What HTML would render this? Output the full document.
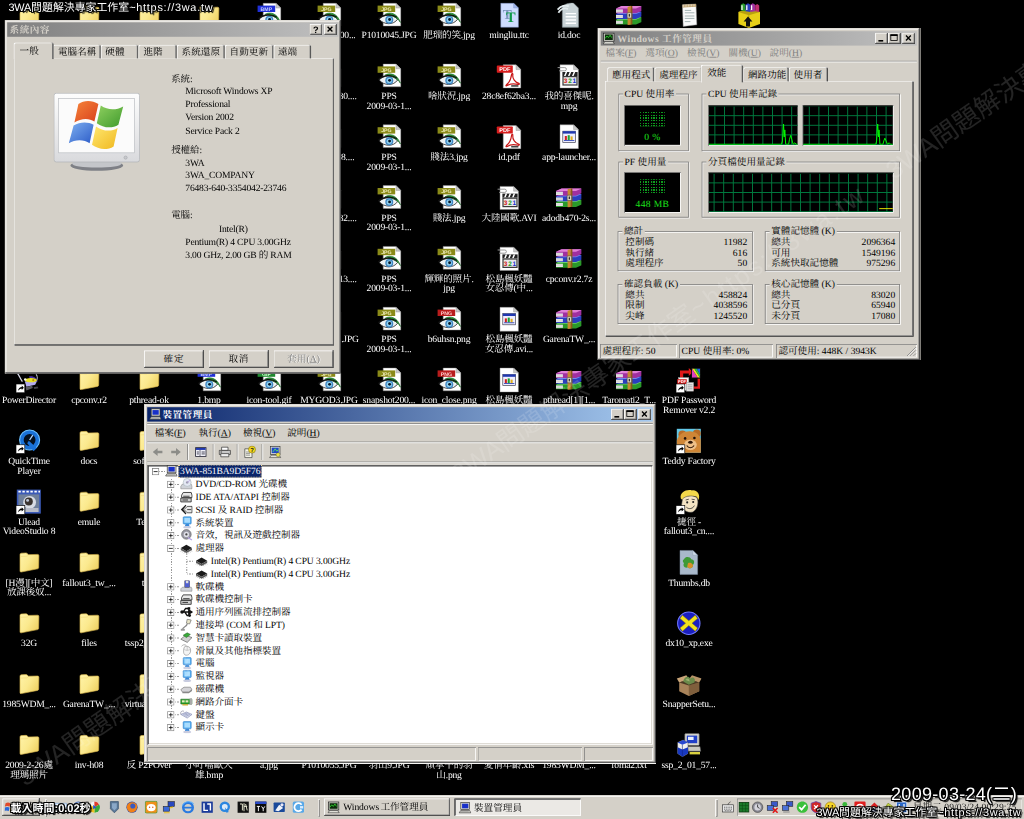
<!DOCTYPE html>
<html><head><meta charset="utf-8"><title>desktop</title>
<style>
html,body{margin:0;padding:0;background:#000}
body{width:1024px;height:819px;overflow:hidden;position:relative;font-family:"Liberation Serif","Noto Serif CJK SC","Noto Sans CJK TC",serif;text-rendering:geometricPrecision}
#d{position:absolute;left:0;top:0;width:1280px;height:1024px;transform:scale(.8);transform-origin:0 0;font-size:12px;line-height:13px;color:#000;overflow:hidden}
#d *{box-sizing:border-box}
.a{position:absolute;white-space:nowrap}
.ic{position:absolute;width:32px;height:32px;overflow:visible}
.lb{position:absolute;width:110px;text-align:center;color:#fff;line-height:12.6px;white-space:nowrap;letter-spacing:-.25px}
.win{position:absolute;background:#d4d0c8;box-shadow:inset -1px -1px #404040,inset 1px 1px #d4d0c8,inset -2px -2px #808080,inset 2px 2px #fff}
.tb{position:absolute;left:4px;right:4px;top:4px;height:18px;background:linear-gradient(90deg,#0a246a,#a6caf0);color:#fff;font-weight:bold;line-height:18px;white-space:nowrap;letter-spacing:.6px}
.tb.in{background:linear-gradient(90deg,#808080,#c0c0c0);color:#d4d0c8}
.cb{position:absolute;top:2px;width:16px;height:14px;background:#d4d0c8;box-shadow:inset -1px -1px #404040,inset 1px 1px #fff,inset -2px -2px #808080}
.cb svg{position:absolute;left:0;top:0}
.btn{position:absolute;background:#d4d0c8;box-shadow:inset -1px -1px #404040,inset 1px 1px #fff,inset -2px -2px #808080;text-align:center;white-space:nowrap}
.sunk{position:absolute;box-shadow:inset 1px 1px #808080,inset -1px -1px #fff}
.sunk2{position:absolute;box-shadow:inset 1px 1px #808080,inset -1px -1px #fff,inset 2px 2px #404040,inset -2px -2px #d4d0c8}
.page{position:absolute;box-shadow:inset 1px 1px #fff,inset -1px -1px #404040,inset -2px -2px #808080}
.tab{position:absolute;background:#d4d0c8;border-radius:2px 2px 0 0;box-shadow:inset 1px 1px #fff,inset -1px 0 #404040,inset -2px 0 #808080;white-space:nowrap;text-align:left;padding-left:6px;line-height:15px}
.grp{position:absolute;border:1px solid #808080;box-shadow:1px 1px #fff,inset 1px 1px #fff}
.gl{position:absolute;background:#d4d0c8;padding:0 2px;white-space:nowrap;line-height:13px}
.blk{position:absolute;background:#000}
.r{text-align:right}
.ov{position:absolute;white-space:nowrap;color:#fff;font-family:"Liberation Sans","Noto Sans CJK TC",sans-serif;text-shadow:-1px -1px 0 #000,1px -1px 0 #000,-1px 1px 0 #000,1px 1px 0 #000,0 -1px 0 #000,0 1px 0 #000,-1px 0 0 #000,1px 0 0 #000,2px 2px 1px #000}
.wm{position:absolute;white-space:nowrap;color:rgba(255,255,255,.14);font-family:"Liberation Sans","Noto Sans CJK TC",sans-serif;font-size:26px;line-height:30px;transform-origin:0 50%}
.tr{position:absolute;left:0;height:16px;line-height:16px;white-space:nowrap;letter-spacing:-.15px}
</style></head>
<body>
<svg width="0" height="0" style="position:absolute"><defs><symbol id="i-jpg" viewBox="0 0 32 32"><path d="M9,1H25L31,7V29.5H9Z" fill="#fff" stroke="#888" stroke-width=".6"/><path d="M25,1V7H31Z" fill="#c8c8c8" stroke="#888" stroke-width=".5"/><rect x="2" y="4" width="22" height="8" fill="#8a8a18"/><text x="13" y="10.5" font-family="Liberation Sans,sans-serif" font-size="6.5" font-weight="bold" text-anchor="middle" fill="#f4f0c0">JPG</text><path d="M4,21C9,15 20,14 27,21C22,28.5 10,28.5 4,21Z" fill="#eef2f4" stroke="#222" stroke-width="1"/><circle cx="16.6" cy="21.6" r="5" fill="#3f86c2"/><circle cx="16.6" cy="21.6" r="3.3" fill="#8fd0f0"/><circle cx="17" cy="21.4" r="1.8" fill="#0a1a2a"/><path d="M11,15C18,11 27,14 30.5,25C27,19 20,15.5 11,15Z" fill="#2e9a3c" stroke="#1c6a28" stroke-width=".8"/><path d="M3,20.5C9,14.5 20,14 26,18.5" fill="none" stroke="#111" stroke-width="1.6"/></symbol><symbol id="i-bmp" viewBox="0 0 32 32"><path d="M9,1H25L31,7V29.5H9Z" fill="#fff" stroke="#888" stroke-width=".6"/><path d="M25,1V7H31Z" fill="#c8c8c8" stroke="#888" stroke-width=".5"/><rect x="2" y="4" width="22" height="8" fill="#2030d8"/><text x="13" y="10.5" font-family="Liberation Sans,sans-serif" font-size="6.5" font-weight="bold" text-anchor="middle" fill="#c8d0ff">BMP</text><path d="M4,21C9,15 20,14 27,21C22,28.5 10,28.5 4,21Z" fill="#eef2f4" stroke="#222" stroke-width="1"/><circle cx="16.6" cy="21.6" r="5" fill="#3f86c2"/><circle cx="16.6" cy="21.6" r="3.3" fill="#8fd0f0"/><circle cx="17" cy="21.4" r="1.8" fill="#0a1a2a"/><path d="M11,15C18,11 27,14 30.5,25C27,19 20,15.5 11,15Z" fill="#2e9a3c" stroke="#1c6a28" stroke-width=".8"/><path d="M3,20.5C9,14.5 20,14 26,18.5" fill="none" stroke="#111" stroke-width="1.6"/></symbol><symbol id="i-png" viewBox="0 0 32 32"><path d="M9,1H25L31,7V29.5H9Z" fill="#fff" stroke="#888" stroke-width=".6"/><path d="M25,1V7H31Z" fill="#c8c8c8" stroke="#888" stroke-width=".5"/><rect x="2" y="4" width="22" height="8" fill="#b81c1c"/><text x="13" y="10.5" font-family="Liberation Sans,sans-serif" font-size="6.5" font-weight="bold" text-anchor="middle" fill="#ffd0d0">PNG</text><path d="M4,21C9,15 20,14 27,21C22,28.5 10,28.5 4,21Z" fill="#eef2f4" stroke="#222" stroke-width="1"/><circle cx="16.6" cy="21.6" r="5" fill="#3f86c2"/><circle cx="16.6" cy="21.6" r="3.3" fill="#8fd0f0"/><circle cx="17" cy="21.4" r="1.8" fill="#0a1a2a"/><path d="M11,15C18,11 27,14 30.5,25C27,19 20,15.5 11,15Z" fill="#2e9a3c" stroke="#1c6a28" stroke-width=".8"/><path d="M3,20.5C9,14.5 20,14 26,18.5" fill="none" stroke="#111" stroke-width="1.6"/></symbol><symbol id="i-gif" viewBox="0 0 32 32"><path d="M9,1H25L31,7V29.5H9Z" fill="#fff" stroke="#888" stroke-width=".6"/><path d="M25,1V7H31Z" fill="#c8c8c8" stroke="#888" stroke-width=".5"/><rect x="2" y="4" width="22" height="8" fill="#208a30"/><text x="13" y="10.5" font-family="Liberation Sans,sans-serif" font-size="6.5" font-weight="bold" text-anchor="middle" fill="#d0ffd0">GIF</text><path d="M4,21C9,15 20,14 27,21C22,28.5 10,28.5 4,21Z" fill="#eef2f4" stroke="#222" stroke-width="1"/><circle cx="16.6" cy="21.6" r="5" fill="#3f86c2"/><circle cx="16.6" cy="21.6" r="3.3" fill="#8fd0f0"/><circle cx="17" cy="21.4" r="1.8" fill="#0a1a2a"/><path d="M11,15C18,11 27,14 30.5,25C27,19 20,15.5 11,15Z" fill="#2e9a3c" stroke="#1c6a28" stroke-width=".8"/><path d="M3,20.5C9,14.5 20,14 26,18.5" fill="none" stroke="#111" stroke-width="1.6"/></symbol><symbol id="i-folder" viewBox="0 0 32 32"><defs><linearGradient id="fg" x1="0" y1="0" x2="1" y2="0.6"><stop offset="0" stop-color="#fff3a8"/><stop offset=".55" stop-color="#fbe98e"/><stop offset="1" stop-color="#f0d468"/></linearGradient></defs><path d="M5,6.2 Q5,4.6 6.6,4.5 L12.4,4.2 Q13.8,4.2 14.5,5.2 L15.2,6.3 L27,6 Q28.6,6 28.6,7.6 L28.3,22.4 Q28.3,23.7 27,24 L6.6,28 Q5,28.3 5,26.8 Z" fill="url(#fg)" stroke="#d6b44c" stroke-width=".8"/><path d="M6,8.6 L13,8.4 Q14.4,8.2 15.2,7.2" stroke="#f0d878" stroke-width=".8" fill="none"/></symbol><symbol id="i-pdf" viewBox="0 0 32 32"><path d="M9,2H25L31,8V31H9Z" fill="#fff" stroke="#888" stroke-width=".6"/><path d="M25,2V8H31Z" fill="#c8c8c8" stroke="#888" stroke-width=".5"/><rect x="1" y="3" width="20" height="9" rx="1" fill="#d81e1e"/><text x="11" y="10.2" font-family="Liberation Sans,sans-serif" font-size="7" font-weight="bold" text-anchor="middle" fill="#fff">PDF</text><path d="M13,27C17,24 19,18 19.5,14C20,12 21.5,12.5 21,15C20.5,19 24,24 28,25C30,25.5 29.5,27 27.5,26.5C23,25.5 17,26 14,28C12.5,29 12,28 13,27Z" fill="none" stroke="#c81818" stroke-width="1.5"/><rect x="19" y="27.4" width="9" height="2" fill="#444"/></symbol><symbol id="i-movie" viewBox="0 0 32 32"><path d="M5,2H22L28,8V31H5Z" fill="#fff" stroke="#888" stroke-width=".6"/><path d="M22,2V8H28Z" fill="#c8c8c8" stroke="#888" stroke-width=".5"/><path d="M2,5.5 h9 a2,2 0 0 1 0,4 h-7" fill="none" stroke="#999" stroke-width="1.2"/><rect x="8" y="11" width="19" height="5" fill="#222"/><path d="M10,16l2,-5h2l-2,5zM15,16l2,-5h2l-2,5zM20,16l2,-5h2l-2,5z" fill="#fff"/><rect x="8" y="16" width="19" height="12" fill="#3a3a3a"/><rect x="9.5" y="17.5" width="16" height="9" fill="#e8e8e8"/><text x="12" y="25.3" font-family="Liberation Sans,sans-serif" font-size="8" font-weight="bold" text-anchor="middle" fill="#d02020">3</text><text x="17.5" y="25.3" font-family="Liberation Sans,sans-serif" font-size="8" font-weight="bold" text-anchor="middle" fill="#20a020">2</text><text x="23" y="25.3" font-family="Liberation Sans,sans-serif" font-size="8" font-weight="bold" text-anchor="middle" fill="#2030d0">1</text></symbol><symbol id="i-rar" viewBox="0 0 32 32"><path d="M0,21.6 L7,18.6 H32 L32,24.6 L25,27.6 H0Z" fill="#2a9a2a"/><path d="M0,21.6 L7,18.6 H32 L25,21.6Z" fill="#6fd06f"/><path d="M0,22.8 H8.6 V26.6 H0Z" fill="#f4f4f4"/><path d="M0,24.0H8.6M0,25.400000000000002H8.6" stroke="#aaa" stroke-width=".5"/><path d="M0,14.6 L7,11.6 H32 L32,17.6 L25,20.6 H0Z" fill="#2a3ec0"/><path d="M0,14.6 L7,11.6 H32 L25,14.6Z" fill="#7088f0"/><path d="M0,15.8 H8.6 V19.6 H0Z" fill="#f4f4f4"/><path d="M0,17.0H8.6M0,18.4H8.6" stroke="#aaa" stroke-width=".5"/><path d="M0,7.6 L7,4.6 H32 L32,10.6 L25,13.6 H0Z" fill="#a030a0"/><path d="M0,7.6 L7,4.6 H32 L25,7.6Z" fill="#e080d8"/><path d="M0,8.8 H8.6 V12.6 H0Z" fill="#f4f4f4"/><path d="M0,10.0H8.6M0,11.399999999999999H8.6" stroke="#aaa" stroke-width=".5"/><path d="M14.5,5.6 L18.5,4.2 V27.8 L14.5,28.2Z" fill="#c88a30"/><path d="M18.5,4.2 L20.5,4.7 V27.3 L18.5,27.8Z" fill="#8a5a18"/><rect x="13.9" y="13" width="5.6" height="6.5" rx="1" fill="#e8e0c8" stroke="#444" stroke-width=".8"/><rect x="15.8" y="14.6" width="1.8" height="3.2" fill="#333"/></symbol><symbol id="i-tt" viewBox="0 0 32 32"><path d="M6,1H22L28,7V31H6Z" fill="#cfdcff" stroke="#7f92c8" stroke-width=".6"/><path d="M22,1V7H28Z" fill="#9fb4e8" stroke="#7f92c8" stroke-width=".5"/><text x="14" y="21" font-family="Liberation Serif,serif" font-size="17" font-weight="bold" text-anchor="middle" fill="#7f98c0">T</text><text x="18.5" y="25" font-family="Liberation Serif,serif" font-size="18" font-weight="bold" text-anchor="middle" fill="#0f9a4a">T</text></symbol><symbol id="i-doc" viewBox="0 0 32 32"><path d="M8,5 C12,1 20,0 22,1 L28,7 V31 H8Z" fill="#c9d3d6" stroke="#8d999c" stroke-width=".6"/><path d="M2,9C6,4 12,3 16,5M3,13C6,8 11,7 15,8" stroke="#e4ecee" stroke-width="2.2" fill="none"/><path d="M12,14H25M12,18H25M12,22H25M12,26H25" stroke="#fff" stroke-width="1.8"/><path d="M8,9V31H28V12" fill="none" stroke="#8d999c" stroke-width=".5"/></symbol><symbol id="i-app" viewBox="0 0 32 32"><path d="M5,1H22L28,7V31H5Z" fill="#fff" stroke="#888" stroke-width=".6"/><path d="M22,1V7H28Z" fill="#c8c8c8" stroke="#888" stroke-width=".5"/><rect x="8.5" y="9" width="16" height="14" fill="#eef" stroke="#334" stroke-width=".8"/><rect x="8.5" y="9" width="16" height="3" fill="#2038b0"/><rect x="11" y="15" width="2.6" height="5" fill="#d02020"/><rect x="14.6" y="14" width="2.6" height="6" fill="#20a030"/><rect x="18.2" y="15.5" width="2.6" height="4.5" fill="#e0b020"/><rect x="10" y="20" width="13" height="1" fill="#2038b0"/></symbol><symbol id="i-txt" viewBox="0 0 32 32"><path d="M8,3 L25,2 L26,28 L9,30Z" fill="#fafafa" stroke="#999" stroke-width=".6"/><path d="M8,3 L25,2 L25.2,5.4 L8.2,6.4Z" fill="#b89860"/><path d="M9.5,3v2.6M11.5,2.9v2.6M13.5,2.8v2.6M15.5,2.7v2.6M17.5,2.6v2.6M19.5,2.5v2.6M21.5,2.4v2.6M23.5,2.3v2.6" stroke="#fff" stroke-width=".7"/><path d="M11,10h8M11,13h12M11,17h12M11,20h12M11,24h7" stroke="#9aa" stroke-width="1.1"/></symbol><symbol id="i-sfx" viewBox="0 0 32 32"><path d="M3,12 L16,8 L30,12 V27 L16,32 L3,27Z" fill="#e8d018"/><path d="M3,12 L16,16 L30,12 L16,8Z" fill="#b8a010"/><path d="M16,16V32" stroke="#a89008" stroke-width=".8"/><path d="M6,10 V3 L9,1 L12,3 V11Z" fill="#2a9a2a"/><path d="M12,11V3 L15,1 L18,3V12Z" fill="#2a3ec0"/><path d="M18,12V3 L21,1 L24,3V11Z" fill="#a030a0"/><path d="M24,11V3.6L26.6,2 L29,4V12Z" fill="#c03070"/><path d="M7.5,3.5v6M13.5,3.5v6M19.5,3.5v6" stroke="#fff" stroke-width="1.6"/><path d="M12.5,30 V24 H9.5 L15,17.5 L20.5,24 H17.5 V30Z" fill="#111"/></symbol><symbol id="i-pdir" viewBox="0 0 32 32"><path d="M2,8 C4,10 5,14 8,18" stroke="#d8d8e8" stroke-width="1.6" fill="none"/><path d="M25,9 C27,11 27,15 25,18" stroke="#c8c8d8" stroke-width="1.4" fill="none"/><path d="M16,12 C20,10 26,13 27,18 L22,19 Z" fill="#4a30a8"/><path d="M11,17.5 L26,18 L24,22 L13,24.5Z" fill="#b4acf0"/><ellipse cx="18.6" cy="16.2" rx="7.6" ry="2.7" fill="#e8e224"/><circle cx="21.6" cy="16.2" r="1.3" fill="#b88a10"/><circle cx="11.6" cy="15.4" r="1.6" fill="#f4f4e0"/><path d="M12,25 L20,23 L21,26 L13,29Z" fill="#5a5a60"/><path d="M22,25l5,-1l1,2.4l-5,1z" fill="#44444a"/><rect x="0" y="21" width="11" height="11" fill="#fff" stroke="#000" stroke-width=".8"/><path d="M2.5,29.5 C3,26 5,24.6 7.2,24.6 V23 L9.8,25.8 L7.2,28.5 V26.8 C5.4,26.8 4,27.6 2.5,29.5Z" fill="#000"/></symbol><symbol id="i-qt" viewBox="0 0 32 32"><circle cx="17" cy="15" r="12.5" fill="#1a72d8"/><circle cx="17" cy="15" r="12.5" fill="none" stroke="#6cc0ff" stroke-width="1.4"/><circle cx="17" cy="15" r="7.4" fill="#04101e"/><path d="M16,16 L26,25 L22,29 L14,19Z" fill="#1a72d8"/><path d="M17,15 L21,9" stroke="#b8dcff" stroke-width="1.6"/><rect x="0" y="21" width="11" height="11" fill="#fff" stroke="#000" stroke-width=".8"/><path d="M2.5,29.5 C3,26 5,24.6 7.2,24.6 V23 L9.8,25.8 L7.2,28.5 V26.8 C5.4,26.8 4,27.6 2.5,29.5Z" fill="#000"/></symbol><symbol id="i-ulead" viewBox="0 0 32 32"><rect x="1" y="1" width="30" height="30" fill="#3b5ab8"/><path d="M3,3.5h3M8,3.5h3M13,3.5h3M18,3.5h3M23,3.5h3M28,3.5h2" stroke="#fff" stroke-width="2.2"/><rect x="3" y="7" width="26" height="22" fill="#70809a"/><circle cx="17" cy="17" r="8" fill="#d8dce4"/><circle cx="16" cy="16" r="5" fill="#3a3430"/><circle cx="14.5" cy="14.5" r="1.8" fill="#c0c8d8"/><rect x="12" y="24" width="16" height="5" fill="#b8bcc8"/><rect x="0" y="21" width="11" height="11" fill="#fff" stroke="#000" stroke-width=".8"/><path d="M2.5,29.5 C3,26 5,24.6 7.2,24.6 V23 L9.8,25.8 L7.2,28.5 V26.8 C5.4,26.8 4,27.6 2.5,29.5Z" fill="#000"/></symbol><symbol id="i-pdfpr" viewBox="0 0 32 32"><path d="M5,4 H16 V1 L21,6 L16,11 V8 H9 V14 H5Z" fill="#e01818"/><path d="M30,14 V27 H22 V30 L17,25.5 L22,21 V24 H27 V14Z" fill="#e01818"/><rect x="19" y="1" width="12" height="13" fill="#111"/><path d="M20,2 l3,0 l7,11 l-3,0z" fill="#f0e020"/><path d="M23,2 l3,0 l4,7 l0,4z" fill="#30c040"/><path d="M26,2 l4,0 l0,7z" fill="#2060e0"/><path d="M20,2 l7,11 l-7,0z" fill="#e040c0"/><rect x="3" y="13" width="13" height="16" fill="#f4f4f4" stroke="#999" stroke-width=".6"/><rect x="1.5" y="15" width="12" height="6" fill="#d81e1e"/><text x="7.5" y="20" font-family="Liberation Sans,sans-serif" font-size="5" font-weight="bold" text-anchor="middle" fill="#fff">PDF</text><rect x="13" y="19" width="9" height="11" fill="#e4e4e4" stroke="#888" stroke-width=".6"/><path d="M14.5,22h6M14.5,24.5h6M14.5,27h6" stroke="#888" stroke-width=".8"/><rect x="0" y="21" width="11" height="11" fill="#fff" stroke="#000" stroke-width=".8"/><path d="M2.5,29.5 C3,26 5,24.6 7.2,24.6 V23 L9.8,25.8 L7.2,28.5 V26.8 C5.4,26.8 4,27.6 2.5,29.5Z" fill="#000"/></symbol><symbol id="i-teddy" viewBox="0 0 32 32"><rect x="1" y="1" width="30" height="30" fill="#62c8e8"/><circle cx="8" cy="8" r="5" fill="#b86c26"/><circle cx="26" cy="7" r="5" fill="#b86c26"/><path d="M1,31 V16 C3,8 9,4 17,4 C25,4 30,9 31,15 V31Z" fill="#cf8636"/><ellipse cx="18" cy="21" rx="8" ry="6.4" fill="#eec088"/><ellipse cx="18" cy="17.8" rx="2.8" ry="2" fill="#301808"/><circle cx="11.4" cy="13" r="1.6" fill="#201008"/><circle cx="23" cy="12.4" r="1.6" fill="#201008"/><path d="M13.4,22C15.6,25.6 20.4,25.6 22.6,22" fill="none" stroke="#301808" stroke-width="1.3"/><rect x="0" y="21" width="11" height="11" fill="#fff" stroke="#000" stroke-width=".8"/><path d="M2.5,29.5 C3,26 5,24.6 7.2,24.6 V23 L9.8,25.8 L7.2,28.5 V26.8 C5.4,26.8 4,27.6 2.5,29.5Z" fill="#000"/></symbol><symbol id="i-vault" viewBox="0 0 32 32"><path d="M6,12 C4,4 14,0 20,2 C27,1 31,8 28,14 L26,10 C20,8 12,9 8,14Z" fill="#f2d84a"/><path d="M8,13 C12,8 22,8 26,11 C29,16 27,26 21,29 C14,31 8,26 7,20Z" fill="#f4e4c4" stroke="#444" stroke-width=".7"/><circle cx="14" cy="17" r="1.3" fill="#222"/><circle cx="21.5" cy="16.5" r="1.3" fill="#222"/><path d="M13,23C16,26 21,25 23,21" fill="none" stroke="#333" stroke-width="1.1"/><path d="M12,14l4,-1M19.5,13l4,.6" stroke="#333" stroke-width="1"/><rect x="0" y="21" width="11" height="11" fill="#fff" stroke="#000" stroke-width=".8"/><path d="M2.5,29.5 C3,26 5,24.6 7.2,24.6 V23 L9.8,25.8 L7.2,28.5 V26.8 C5.4,26.8 4,27.6 2.5,29.5Z" fill="#000"/></symbol><symbol id="i-thumbs" viewBox="0 0 32 32"><path d="M5,1H21L27,7V31H5Z" fill="#a9b9cb" stroke="#7f8fa4" stroke-width=".6"/><path d="M21,1V7H27Z" fill="#d0dcea" stroke="#7f8fa4" stroke-width=".5"/><path d="M10,12 C12,8 18,9 19,12 C23,12 24,17 21,19 C22,23 17,25 15,22 C11,24 8,20 10,17 C8,15 8,13 10,12Z" fill="#3f9a36"/><path d="M15,17 C18,15 22,18 21,21 C20,24 15,24 14,21Z" fill="#d8902a"/></symbol><symbol id="i-dx" viewBox="0 0 32 32"><circle cx="16" cy="16" r="14" fill="#1a1ec0"/><circle cx="16" cy="16" r="14" fill="none" stroke="#6f78ff" stroke-width="1.3"/><path d="M8,6 L16,13 L24,6 L27,10 L20,16 L27,22 L24,26 L16,19 L8,26 L5,22 L12,16 L5,10Z" fill="#f2e21c" stroke="#8a7a00" stroke-width=".6"/></symbol><symbol id="i-snap" viewBox="0 0 32 32"><path d="M4,14 L16,10 L29,14 V25 L16,31 L4,25Z" fill="#a8835a"/><path d="M16,18V31L29,25V14Z" fill="#7f5f3c"/><path d="M4,14 L1,9 L13,5 L16,10Z" fill="#c8a478"/><path d="M29,14 L32,9 L20,5 L16,10Z" fill="#b89468"/><path d="M4,14 L16,18 L29,14 L16,10Z" fill="#4c3a24"/><path d="M9,13 C10,7 15,5 18,9 C22,6 25,10 23,14 L16,17Z" fill="#6a8a4a"/><path d="M12,11 C14,8 17,9 17,13Z" fill="#9ab070"/></symbol><symbol id="i-ssp" viewBox="0 0 32 32"><rect x="11" y="2" width="18" height="15" rx="1" fill="#d8d8d0" stroke="#555" stroke-width=".8"/><rect x="13.5" y="4.5" width="13" height="9.5" fill="#2040c8"/><rect x="15" y="6" width="7" height="4" fill="#e8f0ff"/><path d="M14,18 H30 L31,24 H15Z" fill="#c8c8c0" stroke="#555" stroke-width=".7"/><rect x="17" y="25" width="13" height="3" fill="#d8d040"/><path d="M2,13 L9,10 L15,13 V27 L8,31 L2,27Z" fill="#f0f0f0" stroke="#444" stroke-width=".6"/><path d="M2,19 L8,22 L15,19 V27 L8,31 L2,27Z" fill="#1838c0"/><path d="M2,13 L8,16 L15,13 L9,10Z" fill="#2848d0"/><path d="M8,16V31" stroke="#0c2080" stroke-width=".7"/></symbol><symbol id="s-pc" viewBox="0 0 16 16"><rect x="3" y="1" width="11" height="9" fill="#d8d8d0" stroke="#333" stroke-width=".8"/><rect x="4.6" y="2.6" width="7.8" height="5.8" fill="#1830c8"/><path d="M1,14 L3,11 H14 L15.5,14Z" fill="#e0e0d8" stroke="#333" stroke-width=".8"/><path d="M3,12.6h10" stroke="#777" stroke-width=".7"/></symbol><symbol id="s-dvd" viewBox="0 0 16 16"><path d="M1,11 L3,8 H14 L15,11 V14 H1Z" fill="#cfd2d8" stroke="#777" stroke-width=".6"/><circle cx="9" cy="6" r="5" fill="#e4e8f4" stroke="#9aa" stroke-width=".6"/><circle cx="9" cy="6" r="1.5" fill="#99a"/><path d="M9,6L13,3" stroke="#b8a0e0" stroke-width="1"/></symbol><symbol id="s-ide" viewBox="0 0 16 16"><path d="M2,6 L4,2.6 H14 L15,6 V9 H2Z" fill="#e8e8e8" stroke="#333" stroke-width="1.1"/><path d="M1,9.6 H14 V14.4 H1Z" fill="#d0d0d0" stroke="#333" stroke-width="1.1"/><path d="M3,12h7" stroke="#333" stroke-width="1.2"/><path d="M4,7.3h8" stroke="#333" stroke-width="1.1"/></symbol><symbol id="s-scsi" viewBox="0 0 16 16"><path d="M1,8 L7,2 L8,3 L4,8 L8,13 L7,14Z" fill="#222"/><path d="M5,8 L9,4 H15 V12 H9Z" fill="#e8e8e8" stroke="#222" stroke-width=".9"/><path d="M9,8h5" stroke="#222" stroke-width="1"/></symbol><symbol id="s-sys" viewBox="0 0 16 16"><rect x="4" y="1" width="10" height="9" rx="1" fill="#58b0f0" stroke="#2a78c8" stroke-width=".7"/><rect x="5.5" y="2.4" width="7" height="6" fill="#a8dcff"/><path d="M7,10h4l1,3H6Z" fill="#3a88d8"/><ellipse cx="9" cy="14" rx="5" ry="1.5" fill="#c8cce0"/></symbol><symbol id="s-snd" viewBox="0 0 16 16"><circle cx="8" cy="7" r="6" fill="#9a9aa4" stroke="#555" stroke-width=".7"/><circle cx="8" cy="7" r="3.3" fill="#e0e0e8"/><circle cx="8" cy="7" r="1.4" fill="#444"/><path d="M10,11l5,3" stroke="#b8a8e8" stroke-width="1.6"/></symbol><symbol id="s-cpu" viewBox="0 0 16 16"><path d="M1,8 L8,4 L15,8 L8,12Z" fill="#1a1a1a"/><path d="M1,8V10.4L8,14.4L15,10.4V8L8,12Z" fill="#555"/><path d="M2,11l-1,1.5M4,12l-1,1.5M6,13.2l-1,1.5M14,11l1,1.5M12,12l1,1.5M10,13.2l1,1.5" stroke="#888" stroke-width=".7"/></symbol><symbol id="s-fdd" viewBox="0 0 16 16"><path d="M1,11 L3,9 H14 L15,11 V14 H1Z" fill="#cfd2d8" stroke="#777" stroke-width=".6"/><rect x="6" y="1" width="6" height="8" fill="#5060d0" stroke="#223" stroke-width=".5"/><rect x="7.4" y="1" width="3" height="3" fill="#ddd"/></symbol><symbol id="s-usb" viewBox="0 0 16 16"><path d="M1,8h13M15,8l-4,-2.6v5.2zM4,8l3,-4.4h3M6,8l3,4.4h2" stroke="#111" stroke-width="1.7" fill="none"/><circle cx="2.6" cy="8" r="2.2" fill="#111"/><rect x="9.6" y="2" width="3.2" height="3.2" fill="#111"/><circle cx="12" cy="12.4" r="1.8" fill="#111"/></symbol><symbol id="s-port" viewBox="0 0 16 16"><path d="M9,1 L14,2 L12,7 L8,6Z" fill="#e8e4c8" stroke="#555" stroke-width=".7"/><path d="M9,7 C8,11 4,10 3,14" stroke="#8a8a8a" stroke-width="1.6" fill="none"/><rect x="1" y="13" width="5" height="2.4" fill="#999"/></symbol><symbol id="s-card" viewBox="0 0 16 16"><path d="M1,10 L7,5 L15,8 L9,14Z" fill="#d0d0d0" stroke="#444" stroke-width=".7"/><path d="M4,5 L9,2 L13,4 L8,8Z" fill="#38a838" stroke="#1a5a1a" stroke-width=".6"/></symbol><symbol id="s-mouse" viewBox="0 0 16 16"><path d="M5,5 C5,2 12,2 13,6 C14,10 12,14 8,14 C4,14 4,9 5,5Z" fill="#f4f4f4" stroke="#888" stroke-width=".8"/><path d="M5.4,7 C8,8.5 11,8 13.2,6.6M9,3.4V8" stroke="#aaa" stroke-width=".7" fill="none"/><path d="M8,2C6,0 3,1 2,3" stroke="#888" stroke-width=".8" fill="none"/></symbol><symbol id="s-disk" viewBox="0 0 16 16"><path d="M1,9 L5,6 H13 L15,9 L11,12 H3Z" fill="#d4d4d8" stroke="#666" stroke-width=".7"/><path d="M3,12 H11 L15,9 V10.6 L11,13.6 H3Z" fill="#888"/></symbol><symbol id="s-nic" viewBox="0 0 16 16"><path d="M1,5 H15 V11 H1Z" fill="#2fa52f" stroke="#145a14" stroke-width=".7"/><rect x="2.4" y="6.4" width="3.4" height="2.6" fill="#e8e8c0"/><rect x="7" y="6.4" width="3.4" height="2.6" fill="#e8e8c0"/><path d="M3,11v2h7v-2" fill="#c8b040"/><rect x="12" y="4" width="3" height="8" fill="#aaa"/></symbol><symbol id="s-kbd" viewBox="0 0 16 16"><path d="M1,8 L8,5 L15,8 L9,12.6Z" fill="#d4d8ec" stroke="#7880a8" stroke-width=".7"/><path d="M4,8l5,-1.6M5.6,9.2l5,-2M7.4,10.4l5,-2.4" stroke="#8088b0" stroke-width=".7"/><path d="M1,8C0,5 2,3 5,4" stroke="#889" stroke-width=".8" fill="none"/></symbol><symbol id="s-help" viewBox="0 0 16 16"><path d="M2,4 H9 L11,6 V15 H2Z" fill="#f4f4e8" stroke="#333" stroke-width=".8"/><path d="M3.5,8h5M3.5,10h5M3.5,12h5" stroke="#555" stroke-width=".7"/><circle cx="11" cy="5" r="4.4" fill="#f4d820" stroke="#6a5a00" stroke-width=".6"/><text x="11" y="7.8" font-family="Liberation Sans,sans-serif" font-size="7.5" font-weight="bold" text-anchor="middle" fill="#111">?</text></symbol><symbol id="s-prn" viewBox="0 0 16 16"><path d="M4,2 H12 V6 H4Z" fill="#fff" stroke="#222" stroke-width=".8"/><path d="M1,6 H15 V11 H1Z" fill="#c8c8c8" stroke="#222" stroke-width=".8"/><path d="M3,10 H13 V14 H3Z" fill="#eee" stroke="#222" stroke-width=".8"/><path d="M2.6,8h2" stroke="#222" stroke-width="1"/></symbol><symbol id="s-prop" viewBox="0 0 16 16"><rect x="1.5" y="2.5" width="13" height="11" fill="#f0f0f8" stroke="#223" stroke-width="1"/><rect x="2" y="3" width="12" height="2.4" fill="#2038b0"/><path d="M7,5.4V13" stroke="#223" stroke-width=".8"/><path d="M3,8h2.6M3,10.4h2.6M9,8h4M9,10.4h4" stroke="#223" stroke-width="1"/></symbol><symbol id="s-scan" viewBox="0 0 16 16"><rect x="2" y="1" width="12" height="10" fill="#d8d8d0" stroke="#333" stroke-width=".8"/><rect x="3.6" y="2.6" width="8.8" height="6.8" fill="#1f48c8"/><path d="M5,8l3,-4l2,3l2,-2" stroke="#58e858" stroke-width="1.1" fill="none"/><path d="M1,15 L3,12 H13 L15,15Z" fill="#e0e0d8" stroke="#333" stroke-width=".7"/><circle cx="11.6" cy="11.4" r="2.6" fill="#e8e040" stroke="#444" stroke-width=".5"/></symbol><symbol id="s-tm" viewBox="0 0 16 16"><rect x="1.5" y="1.5" width="13" height="10" fill="#d8d8d0" stroke="#222" stroke-width=".9"/><rect x="3" y="3" width="10" height="7" fill="#0a2a0a"/><path d="M3.6,8l2,-3l2,2l2,-3l2,3" stroke="#30e030" stroke-width="1" fill="none"/><path d="M1,15L3,12H13L15,15Z" fill="#e0e0d8" stroke="#222" stroke-width=".7"/></symbol></defs></svg>
<div id="d">
<div class="a" id="desk" style="left:0;top:0;width:1280px;height:994px">
<svg class="ic" style="left:20.25px;top:2.5px"><use href="#i-folder"/></svg>
<svg class="ic" style="left:95.25px;top:2.5px"><use href="#i-folder"/></svg>
<svg class="ic" style="left:170.25px;top:2.5px"><use href="#i-folder"/></svg>
<svg class="ic" style="left:245.25px;top:2.5px"><use href="#i-folder"/></svg>
<svg class="ic" style="left:320.25px;top:2.5px"><use href="#i-bmp"/></svg>
<svg class="ic" style="left:395.25px;top:2.5px"><use href="#i-jpg"/></svg><div class="lb" style="left:356.25px;top:37.5px">P101000100...</div>
<svg class="ic" style="left:470.25px;top:2.5px"><use href="#i-jpg"/></svg><div class="lb" style="left:431.25px;top:37.5px">P1010045.JPG</div>
<svg class="ic" style="left:545.25px;top:2.5px"><use href="#i-jpg"/></svg><div class="lb" style="left:506.25px;top:37.5px">肥瑞的笑.jpg</div>
<svg class="ic" style="left:620.25px;top:2.5px"><use href="#i-tt"/></svg><div class="lb" style="left:581.25px;top:37.5px">mingliu.ttc</div>
<svg class="ic" style="left:695.25px;top:2.5px"><use href="#i-doc"/></svg><div class="lb" style="left:656.25px;top:37.5px">id.doc</div>
<svg class="ic" style="left:770.25px;top:2.5px"><use href="#i-rar"/></svg>
<svg class="ic" style="left:845.25px;top:2.5px"><use href="#i-txt"/></svg>
<svg class="ic" style="left:920.25px;top:2.5px"><use href="#i-sfx"/></svg>
<svg class="ic" style="left:395.25px;top:78.5px"><use href="#i-jpg"/></svg><div class="lb" style="left:356.25px;top:113.5px">P101001030....</div>
<svg class="ic" style="left:470.25px;top:78.5px"><use href="#i-jpg"/></svg><div class="lb" style="left:431.25px;top:113.5px">PPS<br>2009-03-1...</div>
<svg class="ic" style="left:545.25px;top:78.5px"><use href="#i-jpg"/></svg><div class="lb" style="left:506.25px;top:113.5px">啥狀況.jpg</div>
<svg class="ic" style="left:620.25px;top:78.5px"><use href="#i-pdf"/></svg><div class="lb" style="left:581.25px;top:113.5px">28c8ef62ba3...</div>
<svg class="ic" style="left:695.25px;top:78.5px"><use href="#i-movie"/></svg><div class="lb" style="left:656.25px;top:113.5px">我的喜傑呢.<br>mpg</div>
<svg class="ic" style="left:395.25px;top:154.5px"><use href="#i-jpg"/></svg><div class="lb" style="left:356.25px;top:189.5px">P10100128....</div>
<svg class="ic" style="left:470.25px;top:154.5px"><use href="#i-jpg"/></svg><div class="lb" style="left:431.25px;top:189.5px">PPS<br>2009-03-1...</div>
<svg class="ic" style="left:545.25px;top:154.5px"><use href="#i-jpg"/></svg><div class="lb" style="left:506.25px;top:189.5px">賤法3.jpg</div>
<svg class="ic" style="left:620.25px;top:154.5px"><use href="#i-pdf"/></svg><div class="lb" style="left:581.25px;top:189.5px">id.pdf</div>
<svg class="ic" style="left:695.25px;top:154.5px"><use href="#i-app"/></svg><div class="lb" style="left:656.25px;top:189.5px">app-launcher...</div>
<svg class="ic" style="left:395.25px;top:230.5px"><use href="#i-jpg"/></svg><div class="lb" style="left:356.25px;top:265.5px">P101001032....</div>
<svg class="ic" style="left:470.25px;top:230.5px"><use href="#i-jpg"/></svg><div class="lb" style="left:431.25px;top:265.5px">PPS<br>2009-03-1...</div>
<svg class="ic" style="left:545.25px;top:230.5px"><use href="#i-jpg"/></svg><div class="lb" style="left:506.25px;top:265.5px">賤法.jpg</div>
<svg class="ic" style="left:620.25px;top:230.5px"><use href="#i-movie"/></svg><div class="lb" style="left:581.25px;top:265.5px">大陸國歌.AVI</div>
<svg class="ic" style="left:695.25px;top:230.5px"><use href="#i-rar"/></svg><div class="lb" style="left:656.25px;top:265.5px">adodb470-2s...</div>
<svg class="ic" style="left:395.25px;top:306.5px"><use href="#i-jpg"/></svg><div class="lb" style="left:356.25px;top:341.5px">P101001013....</div>
<svg class="ic" style="left:470.25px;top:306.5px"><use href="#i-jpg"/></svg><div class="lb" style="left:431.25px;top:341.5px">PPS<br>2009-03-1...</div>
<svg class="ic" style="left:545.25px;top:306.5px"><use href="#i-jpg"/></svg><div class="lb" style="left:506.25px;top:341.5px">輝輝的照片.<br>jpg</div>
<svg class="ic" style="left:620.25px;top:306.5px"><use href="#i-movie"/></svg><div class="lb" style="left:581.25px;top:341.5px">松島楓妖豔<br>女忍傳(中...</div>
<svg class="ic" style="left:695.25px;top:306.5px"><use href="#i-rar"/></svg><div class="lb" style="left:656.25px;top:341.5px">cpconv.r2.7z</div>
<svg class="ic" style="left:395.25px;top:382.5px"><use href="#i-jpg"/></svg><div class="lb" style="left:356.25px;top:417.5px">P10100105.JPG</div>
<svg class="ic" style="left:470.25px;top:382.5px"><use href="#i-jpg"/></svg><div class="lb" style="left:431.25px;top:417.5px">PPS<br>2009-03-1...</div>
<svg class="ic" style="left:545.25px;top:382.5px"><use href="#i-png"/></svg><div class="lb" style="left:506.25px;top:417.5px">b6uhsn.png</div>
<svg class="ic" style="left:620.25px;top:382.5px"><use href="#i-app"/></svg><div class="lb" style="left:581.25px;top:417.5px">松島楓妖豔<br>女忍傳.avi...</div>
<svg class="ic" style="left:695.25px;top:382.5px"><use href="#i-rar"/></svg><div class="lb" style="left:656.25px;top:417.5px">GarenaTW_...</div>
<svg class="ic" style="left:20.25px;top:458.5px"><use href="#i-pdir"/></svg><div class="lb" style="left:-18.75px;top:493.5px">PowerDirector</div>
<svg class="ic" style="left:95.25px;top:458.5px"><use href="#i-folder"/></svg><div class="lb" style="left:56.25px;top:493.5px">cpconv.r2</div>
<svg class="ic" style="left:170.25px;top:458.5px"><use href="#i-folder"/></svg><div class="lb" style="left:131.25px;top:493.5px">pthread-ok</div>
<svg class="ic" style="left:245.25px;top:458.5px"><use href="#i-bmp"/></svg><div class="lb" style="left:206.25px;top:493.5px">1.bmp</div>
<svg class="ic" style="left:320.25px;top:458.5px"><use href="#i-gif"/></svg><div class="lb" style="left:281.25px;top:493.5px">icon-tool.gif</div>
<svg class="ic" style="left:395.25px;top:458.5px"><use href="#i-jpg"/></svg><div class="lb" style="left:356.25px;top:493.5px">MYGOD3.JPG</div>
<svg class="ic" style="left:470.25px;top:458.5px"><use href="#i-jpg"/></svg><div class="lb" style="left:431.25px;top:493.5px">snapshot200...</div>
<svg class="ic" style="left:545.25px;top:458.5px"><use href="#i-png"/></svg><div class="lb" style="left:506.25px;top:493.5px">icon_close.png</div>
<svg class="ic" style="left:620.25px;top:458.5px"><use href="#i-app"/></svg><div class="lb" style="left:581.25px;top:493.5px">松島楓妖豔</div>
<svg class="ic" style="left:695.25px;top:458.5px"><use href="#i-rar"/></svg><div class="lb" style="left:656.25px;top:493.5px">pthread[1][1...</div>
<svg class="ic" style="left:770.25px;top:458.5px"><use href="#i-rar"/></svg><div class="lb" style="left:731.25px;top:493.5px">Taromati2_T...</div>
<svg class="ic" style="left:845.25px;top:458.5px"><use href="#i-pdfpr"/></svg><div class="lb" style="left:806.25px;top:493.5px">PDF Password<br>Remover v2.2</div>
<svg class="ic" style="left:20.25px;top:534.5px"><use href="#i-qt"/></svg><div class="lb" style="left:-18.75px;top:569.5px">QuickTime<br>Player</div>
<svg class="ic" style="left:95.25px;top:534.5px"><use href="#i-folder"/></svg><div class="lb" style="left:56.25px;top:569.5px">docs</div>
<svg class="ic" style="left:170.25px;top:534.5px"><use href="#i-folder"/></svg><div class="lb" style="left:131.25px;top:569.5px">software</div>
<svg class="ic" style="left:845.25px;top:534.5px"><use href="#i-teddy"/></svg><div class="lb" style="left:806.25px;top:569.5px">Teddy Factory</div>
<svg class="ic" style="left:20.25px;top:610.5px"><use href="#i-ulead"/></svg><div class="lb" style="left:-18.75px;top:645.5px">Ulead<br>VideoStudio 8</div>
<svg class="ic" style="left:95.25px;top:610.5px"><use href="#i-folder"/></svg><div class="lb" style="left:56.25px;top:645.5px">emule</div>
<svg class="ic" style="left:170.25px;top:610.5px"><use href="#i-folder"/></svg><div class="lb" style="left:131.25px;top:645.5px">Tempo</div>
<svg class="ic" style="left:845.25px;top:610.5px"><use href="#i-vault"/></svg><div class="lb" style="left:806.25px;top:645.5px">捷徑 -<br>fallout3_cn....</div>
<svg class="ic" style="left:20.25px;top:686.5px"><use href="#i-folder"/></svg><div class="lb" style="left:-18.75px;top:721.5px">[H漫][中文]<br>放課後奴...</div>
<svg class="ic" style="left:95.25px;top:686.5px"><use href="#i-folder"/></svg><div class="lb" style="left:56.25px;top:721.5px">fallout3_tw_...</div>
<svg class="ic" style="left:170.25px;top:686.5px"><use href="#i-folder"/></svg><div class="lb" style="left:131.25px;top:721.5px">tmp</div>
<svg class="ic" style="left:845.25px;top:686.5px"><use href="#i-thumbs"/></svg><div class="lb" style="left:806.25px;top:721.5px">Thumbs.db</div>
<svg class="ic" style="left:20.25px;top:762.5px"><use href="#i-folder"/></svg><div class="lb" style="left:-18.75px;top:797.5px">32G</div>
<svg class="ic" style="left:95.25px;top:762.5px"><use href="#i-folder"/></svg><div class="lb" style="left:56.25px;top:797.5px">files</div>
<svg class="ic" style="left:170.25px;top:762.5px"><use href="#i-folder"/></svg><div class="lb" style="left:131.25px;top:797.5px">tssp2_01_5...</div>
<svg class="ic" style="left:845.25px;top:762.5px"><use href="#i-dx"/></svg><div class="lb" style="left:806.25px;top:797.5px">dx10_xp.exe</div>
<svg class="ic" style="left:20.25px;top:838.5px"><use href="#i-folder"/></svg><div class="lb" style="left:-18.75px;top:873.5px">1985WDM_...</div>
<svg class="ic" style="left:95.25px;top:838.5px"><use href="#i-folder"/></svg><div class="lb" style="left:56.25px;top:873.5px">GarenaTW_...</div>
<svg class="ic" style="left:170.25px;top:838.5px"><use href="#i-folder"/></svg><div class="lb" style="left:131.25px;top:873.5px">virtualbox_...</div>
<svg class="ic" style="left:845.25px;top:838.5px"><use href="#i-snap"/></svg><div class="lb" style="left:806.25px;top:873.5px">SnapperSetu...</div>
<svg class="ic" style="left:20.25px;top:914.5px"><use href="#i-folder"/></svg><div class="lb" style="left:-18.75px;top:949.5px">2009-2-26處<br>理瑪照片</div>
<svg class="ic" style="left:95.25px;top:914.5px"><use href="#i-folder"/></svg><div class="lb" style="left:56.25px;top:949.5px">inv-h08</div>
<svg class="ic" style="left:170.25px;top:914.5px"><use href="#i-folder"/></svg><div class="lb" style="left:131.25px;top:949.5px">反 P2POver</div>
<svg class="ic" style="left:245.25px;top:914.5px"><use href="#i-bmp"/></svg><div class="lb" style="left:206.25px;top:949.5px">小叮噹歐大<br>雄.bmp</div>
<svg class="ic" style="left:320.25px;top:914.5px"><use href="#i-jpg"/></svg><div class="lb" style="left:281.25px;top:949.5px">a.jpg</div>
<svg class="ic" style="left:395.25px;top:914.5px"><use href="#i-jpg"/></svg><div class="lb" style="left:356.25px;top:949.5px">P1010055.JPG</div>
<svg class="ic" style="left:470.25px;top:914.5px"><use href="#i-jpg"/></svg><div class="lb" style="left:431.25px;top:949.5px">羽山9.JPG</div>
<svg class="ic" style="left:545.25px;top:914.5px"><use href="#i-png"/></svg><div class="lb" style="left:506.25px;top:949.5px">頑掌牛的羽<br>山.png</div>
<svg class="ic" style="left:620.25px;top:914.5px"><use href="#i-app"/></svg><div class="lb" style="left:581.25px;top:949.5px">愛情年齡.xls</div>
<svg class="ic" style="left:695.25px;top:914.5px"><use href="#i-folder"/></svg><div class="lb" style="left:656.25px;top:949.5px">1985WDM_...</div>
<svg class="ic" style="left:770.25px;top:914.5px"><use href="#i-txt"/></svg><div class="lb" style="left:731.25px;top:949.5px">foma2.txt</div>
<svg class="ic" style="left:845.25px;top:914.5px"><use href="#i-ssp"/></svg><div class="lb" style="left:806.25px;top:949.5px">ssp_2_01_57...</div>
</div>
<div class="win" style="left:6px;top:24.5px;width:419.5px;height:442px">
<div class="tb in" style="left:3px;right:3px;top:3px"><span class="a" style="left:3px;top:0">系統內容</span><div class="cb" style="right:20px"><svg width="16" height="14"><text x="8" y="11.2" font-family="Liberation Sans,sans-serif" font-size="11.5" font-weight="bold" text-anchor="middle" fill="#000">?</text></svg></div><div class="cb" style="right:2px"><svg width="16" height="14"><path d="M4.5,3.5l6,6M10.5,3.5l-6,6" stroke="#000" stroke-width="1.7"/></svg></div></div>
<div class="page" style="left:10.5px;top:47.5px;width:401.5px;height:359.5px"></div>
<div class="tab" style="left:60.4px;top:31px;width:59.3px;height:17px;padding-top:2px">電腦名稱</div><div class="tab" style="left:119.7px;top:31px;width:47.7px;height:17px;padding-top:2px">硬體</div><div class="tab" style="left:167.4px;top:31px;width:47.6px;height:17px;padding-top:2px">進階</div><div class="tab" style="left:215px;top:31px;width:60.0px;height:17px;padding-top:2px">系統還原</div><div class="tab" style="left:275px;top:31px;width:60.5px;height:17px;padding-top:2px">自動更新</div><div class="tab" style="left:335.5px;top:31px;width:47.5px;height:17px;padding-top:2px">遠端</div><div class="tab" style="left:10.5px;top:28.5px;width:50.5px;height:21px;padding-top:3px;padding-left:8px">一般</div>
<svg class="a" style="left:60.5px;top:91px" width="108" height="98" viewBox="0 0 108 98"><defs><linearGradient id="mg" x1="0" y1="0" x2="0" y2="1"><stop offset="0" stop-color="#fdfdfd"/><stop offset="1" stop-color="#d9dadd"/></linearGradient><linearGradient id="mr" x1="0" y1="0" x2="1" y2="1"><stop offset="0" stop-color="#f6843a"/><stop offset="1" stop-color="#d8401c"/></linearGradient><linearGradient id="mgn" x1="0" y1="0" x2="1" y2="1"><stop offset="0" stop-color="#8fd060"/><stop offset="1" stop-color="#3f9a2c"/></linearGradient><linearGradient id="mb" x1="0" y1="0" x2="1" y2="1"><stop offset="0" stop-color="#7fb0f0"/><stop offset="1" stop-color="#2c5cc8"/></linearGradient><linearGradient id="my" x1="0" y1="0" x2="1" y2="1"><stop offset="0" stop-color="#ffe870"/><stop offset="1" stop-color="#f0b820"/></linearGradient></defs><ellipse cx="54" cy="91" rx="33" ry="6.5" fill="#7e8086"/><ellipse cx="54" cy="88.5" rx="31" ry="5" fill="#c4c6ca"/><rect x="0.5" y="0.5" width="107" height="86" rx="3" fill="url(#mg)" stroke="#b4b6ba"/><rect x="6" y="7" width="95" height="68" fill="#fbfbfb" stroke="#c4c6ca"/><circle cx="90" cy="81" r="2" fill="#c8cace" stroke="#9a9ca0" stroke-width=".6"/><path d="M31,14 C38,9 48,9 56,14 L51,36 C44,31 34,32 26,37Z" fill="url(#mr)"/><path d="M59,16 C68,22 78,22 87,17 L81,40 C73,45 62,44 54,38Z" fill="url(#mgn)"/><path d="M25,41 C33,36 43,36 50,40 L45,63 C38,58 27,58 19,63Z" fill="url(#mb)"/><path d="M53,42 C61,48 72,49 80,44 L75,67 C67,72 56,71 48,65Z" fill="url(#my)"/></svg><div class="a" style="left:208px;top:67.2px;letter-spacing:-.25px">系統:</div><div class="a" style="left:225.6px;top:82.2px;letter-spacing:-.25px">Microsoft Windows XP</div><div class="a" style="left:225.6px;top:99px;letter-spacing:-.25px">Professional</div><div class="a" style="left:225.6px;top:115.7px;letter-spacing:-.25px">Version 2002</div><div class="a" style="left:225.6px;top:132.4px;letter-spacing:-.25px">Service Pack 2</div><div class="a" style="left:208px;top:156.2px;letter-spacing:-.25px">授權給:</div><div class="a" style="left:225.6px;top:172px;letter-spacing:-.25px">3WA</div><div class="a" style="left:225.6px;top:188.8px;letter-spacing:-.25px">3WA_COMPANY</div><div class="a" style="left:225.6px;top:204.9px;letter-spacing:-.25px">76483-640-3354042-23746</div><div class="a" style="left:208px;top:237.5px;letter-spacing:-.25px">電腦:</div><div class="a" style="left:267.7px;top:255px;letter-spacing:-.25px">Intel(R)</div><div class="a" style="left:225.6px;top:271.5px;letter-spacing:-.25px">Pentium(R) 4 CPU 3.00GHz</div><div class="a" style="left:225.6px;top:287.3px;letter-spacing:-.25px">3.00 GHz, 2.00 GB 的 RAM</div>
<div class="btn" style="left:174px;top:413px;width:75px;height:22px;line-height:21px;letter-spacing:1px">確定</div><div class="btn" style="left:255px;top:413px;width:75px;height:22px;line-height:21px;letter-spacing:1px">取消</div><div class="btn" style="left:336px;top:413px;width:75px;height:22px;line-height:21px;color:#808080;text-shadow:1px 1px #fff">套用(<u>A</u>)</div>
</div>
<div class="win" style="left:747px;top:35px;width:403px;height:415px">
<div class="tb in"><svg class="a" style="left:2px;top:1px" width="16" height="16"><use href="#s-tm"/></svg><span class="a" style="left:21px;top:0">Windows 工作管理員</span><div class="cb" style="right:36px"><svg width="16" height="14"><rect x="4" y="9" width="6" height="2" fill="#000"/></svg></div><div class="cb" style="right:20px"><svg width="16" height="14"><rect x="3.5" y="2.5" width="8" height="7" fill="none" stroke="#000"/><rect x="3" y="2" width="9" height="2" fill="#000"/></svg></div><div class="cb" style="right:2px"><svg width="16" height="14"><path d="M4.5,3.5l6,6M10.5,3.5l-6,6" stroke="#000" stroke-width="1.7"/></svg></div></div>
<div class="a" style="left:10px;top:24.5px;color:#808080">檔案(<u>F</u>)</div><div class="a" style="left:59.7px;top:24.5px;color:#808080">選項(<u>O</u>)</div><div class="a" style="left:111.7px;top:24.5px;color:#808080">檢視(<u>V</u>)</div><div class="a" style="left:163.5px;top:24.5px;color:#808080">關機(<u>U</u>)</div><div class="a" style="left:215px;top:24.5px;color:#808080">說明(<u>H</u>)</div><div class="a" style="left:4px;top:41px;width:395px;height:1px;background:#808080"></div><div class="a" style="left:4px;top:42px;width:395px;height:1px;background:#fff"></div>
<div class="page" style="left:8.5px;top:66px;width:386.5px;height:320px"></div>
<div class="tab" style="left:12px;top:49px;width:59px;height:18px;padding-top:2px">應用程式</div><div class="tab" style="left:71px;top:49px;width:60px;height:18px;padding-top:2px">處理程序</div><div class="tab" style="left:182px;top:49px;width:57px;height:18px;padding-top:2px">網路功能</div><div class="tab" style="left:239px;top:49px;width:49px;height:18px;padding-top:2px">使用者</div><div class="tab" style="left:129px;top:46px;width:53px;height:22px;padding-top:3px;padding-left:8px">效能</div>
<div class="grp" style="left:25.6px;top:81.6px;width:88px;height:72.4px"></div><div class="gl" style="left:31.6px;top:75.6px">CPU 使用率</div><div class="sunk" style="left:33px;top:96px;width:71px;height:51px"></div><div class="blk" style="left:34px;top:97px;width:69px;height:49px"><div class="a" style="left:19px;top:8px;width:15px;height:18px;background:repeating-linear-gradient(90deg,transparent 0 1px,#000 1px 2px),repeating-linear-gradient(#0e9a1e 0 1px,#000 1px 2px)"></div><div class="a" style="left:35px;top:8px;width:15px;height:18px;background:repeating-linear-gradient(90deg,transparent 0 1px,#000 1px 2px),repeating-linear-gradient(#0e9a1e 0 1px,#000 1px 2px)"></div><div class="a" style="left:0;top:33px;width:69px;text-align:center;color:#1be41b;letter-spacing:.4px">0 %</div></div><div class="grp" style="left:130px;top:81.6px;width:248px;height:72.4px"></div><div class="gl" style="left:136px;top:75.6px">CPU 使用率記錄</div><div class="sunk" style="left:137.5px;top:96px;width:113.5px;height:51px"></div><div class="a" style="left:138.5px;top:97px;width:111.5px;height:49px;background-color:#000;background-image:linear-gradient(#007a3e 1px,transparent 1px),linear-gradient(90deg,#007a3e 1px,transparent 1px);background-size:12px 12px;border-top:1px solid #000;background-position:7px -1px"></div><svg class="a" style="left:138.5px;top:97px" width="111.5" height="49"><polyline points="0.0,48.3 90.9,48.3 92.1,44.1 93.4,23.0 94.3,39.2 95.0,30.4 96.1,48.3 99.8,48.3 100.9,42.1 102.4,37.2 103.7,42.1 105.4,48.3 107.6,46.5 109.3,48.3 111.5,48.3" fill="none" stroke="#00ff00" stroke-width="1.2"/></svg><div class="sunk" style="left:256px;top:96px;width:114px;height:51px"></div><div class="a" style="left:257px;top:97px;width:112px;height:49px;background-color:#000;background-image:linear-gradient(#007a3e 1px,transparent 1px),linear-gradient(90deg,#007a3e 1px,transparent 1px);background-size:12px 12px;border-top:1px solid #000;background-position:7px -1px"></div><svg class="a" style="left:257px;top:97px" width="112" height="49"><polyline points="0.0,48.3 90.7,48.3 91.8,44.1 93.1,23.0 94.1,39.2 94.8,30.4 95.9,48.3 99.7,48.3 100.8,44.1 102.1,40.7 103.5,44.1 105.3,48.3 107.5,46.5 109.2,48.3 112.0,48.3" fill="none" stroke="#00ff00" stroke-width="1.2"/></svg>
<div class="grp" style="left:25.6px;top:166.5px;width:88px;height:70.5px"></div><div class="gl" style="left:31.6px;top:160.5px">PF 使用量</div><div class="sunk" style="left:33px;top:180px;width:71px;height:51px"></div><div class="blk" style="left:34px;top:181px;width:69px;height:49px"><div class="a" style="left:19px;top:8px;width:15px;height:18px;background:repeating-linear-gradient(90deg,transparent 0 1px,#000 1px 2px),repeating-linear-gradient(#0e9a1e 0 1px,#000 1px 2px)"></div><div class="a" style="left:35px;top:8px;width:15px;height:18px;background:repeating-linear-gradient(90deg,transparent 0 1px,#000 1px 2px),repeating-linear-gradient(#0e9a1e 0 1px,#000 1px 2px)"></div><div class="a" style="left:0;top:33px;width:69px;text-align:center;color:#1be41b;letter-spacing:.4px">448 MB</div></div><div class="grp" style="left:130px;top:166.5px;width:248px;height:70.5px"></div><div class="gl" style="left:136px;top:160.5px">分頁檔使用量記錄</div><div class="sunk" style="left:137.5px;top:180px;width:232.5px;height:51px"></div><div class="a" style="left:138.5px;top:181px;width:230.5px;height:49px;background-color:#000;background-image:linear-gradient(#007a3e 1px,transparent 1px),linear-gradient(90deg,#007a3e 1px,transparent 1px);background-size:12px 12px;border-top:1px solid #000;background-position:6px -1px"></div><svg class="a" style="left:138.5px;top:181px" width="230.5" height="49"><polyline points="213.0,44.8 230.5,44.8" fill="none" stroke="#e8e800" stroke-width="1.2"/></svg>
<div class="grp" style="left:25px;top:254px;width:169px;height:50px"></div><div class="gl" style="left:31px;top:248px">總計</div><div class="a" style="left:34.6px;top:261.0px">控制碼</div><div class="a r" style="left:107px;width:80px;top:261.0px">11982</div><div class="a" style="left:34.6px;top:274.6px">執行緒</div><div class="a r" style="left:107px;width:80px;top:274.6px">616</div><div class="a" style="left:34.6px;top:288.2px">處理程序</div><div class="a r" style="left:107px;width:80px;top:288.2px">50</div><div class="grp" style="left:209px;top:254px;width:169px;height:50px"></div><div class="gl" style="left:215px;top:248px">實體記憶體 (K)</div><div class="a" style="left:217px;top:261.0px">總共</div><div class="a r" style="left:292px;width:80px;top:261.0px">2096364</div><div class="a" style="left:217px;top:274.6px">可用</div><div class="a r" style="left:292px;width:80px;top:274.6px">1549196</div><div class="a" style="left:217px;top:288.2px">系統快取記憶體</div><div class="a r" style="left:292px;width:80px;top:288.2px">975296</div><div class="grp" style="left:25px;top:320px;width:169px;height:50px"></div><div class="gl" style="left:31px;top:314px">確認負載 (K)</div><div class="a" style="left:34.6px;top:326.5px">總共</div><div class="a r" style="left:107px;width:80px;top:326.5px">458824</div><div class="a" style="left:34.6px;top:340.1px">限制</div><div class="a r" style="left:107px;width:80px;top:340.1px">4038596</div><div class="a" style="left:34.6px;top:353.7px">尖峰</div><div class="a r" style="left:107px;width:80px;top:353.7px">1245520</div><div class="grp" style="left:209px;top:320px;width:169px;height:50px"></div><div class="gl" style="left:215px;top:314px">核心記憶體 (K)</div><div class="a" style="left:217px;top:326.5px">總共</div><div class="a r" style="left:292px;width:80px;top:326.5px">83020</div><div class="a" style="left:217px;top:340.1px">已分頁</div><div class="a r" style="left:292px;width:80px;top:340.1px">65940</div><div class="a" style="left:217px;top:353.7px">未分頁</div><div class="a r" style="left:292px;width:80px;top:353.7px">17080</div>
<div class="sunk" style="left:3px;top:395px;width:96px;height:17px;line-height:16px;padding-left:3px;white-space:nowrap;overflow:hidden">處理程序: 50</div><div class="sunk" style="left:102px;top:395px;width:117px;height:17px;line-height:16px;padding-left:3px;white-space:nowrap;overflow:hidden">CPU 使用率: 0%</div><div class="sunk" style="left:223px;top:395px;width:176px;height:17px;line-height:16px;padding-left:3px;white-space:nowrap;overflow:hidden">認可使用: 448K / 3943K</div><svg class="a" style="left:386px;top:398px" width="13" height="13"><path d="M12,1L1,12M12,5L5,12M12,9L9,12" stroke="#808080" stroke-width="1.2"/><path d="M12,2L2,12M12,6L6,12M12,10L10,12" stroke="#fff" stroke-width=".8"/></svg></div>
<div class="win" style="left:180px;top:505px;width:640px;height:449px">
<div class="tb"><svg class="a" style="left:2px;top:1px" width="16" height="16"><use href="#s-pc"/></svg><span class="a" style="left:19px;top:0">裝置管理員</span><div class="cb" style="right:36px"><svg width="16" height="14"><rect x="4" y="9" width="6" height="2" fill="#000"/></svg></div><div class="cb" style="right:20px"><svg width="16" height="14"><rect x="3.5" y="2.5" width="8" height="7" fill="none" stroke="#000"/><rect x="3" y="2" width="9" height="2" fill="#000"/></svg></div><div class="cb" style="right:2px"><svg width="16" height="14"><path d="M4.5,3.5l6,6M10.5,3.5l-6,6" stroke="#000" stroke-width="1.7"/></svg></div></div>
<div class="a" style="left:4px;top:23.5px;width:632px;height:1px;background:#808080"></div><div class="a" style="left:4px;top:24.5px;width:632px;height:1px;background:#fff"></div><div class="a" style="left:4px;top:46.5px;width:632px;height:1px;background:#808080"></div><div class="a" style="left:4px;top:47.5px;width:632px;height:1px;background:#fff"></div><div class="a" style="left:4px;top:72px;width:632px;height:1px;background:#808080"></div><div class="a" style="left:4px;top:73px;width:632px;height:1px;background:#fff"></div>
<div class="a" style="left:13.4px;top:30px">檔案(<u>F</u>)</div><div class="a" style="left:68px;top:30px">執行(<u>A</u>)</div><div class="a" style="left:123.6px;top:30px">檢視(<u>V</u>)</div><div class="a" style="left:179px;top:30px">說明(<u>H</u>)</div>
<svg class="a" style="left:9px;top:52px" width="40" height="16"><path d="M2,8l6,-5v3.4h6v3.2h-6v3.4z" fill="#8c8c88"/><path d="M37,8l-6,-5v3.4h-6v3.2h6v3.4z" fill="#8c8c88"/></svg><div class="a" style="left:54.3px;top:50px;width:1px;height:20px;background:#808080"></div><div class="a" style="left:55.3px;top:50px;width:1px;height:20px;background:#fff"></div><div class="a" style="left:86px;top:50px;width:1px;height:20px;background:#808080"></div><div class="a" style="left:87px;top:50px;width:1px;height:20px;background:#fff"></div><div class="a" style="left:116px;top:50px;width:1px;height:20px;background:#808080"></div><div class="a" style="left:117px;top:50px;width:1px;height:20px;background:#fff"></div><div class="a" style="left:147.3px;top:50px;width:1px;height:20px;background:#808080"></div><div class="a" style="left:148.3px;top:50px;width:1px;height:20px;background:#fff"></div><svg class="a" style="left:62.5px;top:52px" width="16" height="16"><use href="#s-prop"/></svg><svg class="a" style="left:93px;top:52px" width="16" height="16"><use href="#s-prn"/></svg><svg class="a" style="left:124px;top:52px" width="16" height="16"><use href="#s-help"/></svg><svg class="a" style="left:156px;top:52px" width="16" height="16"><use href="#s-scan"/></svg>
<div class="sunk2" style="left:4px;top:75.5px;width:632px;height:350.5px;background:#fff;overflow:hidden"><div class="a" style="left:1.5px;top:-1.3px">
<div class="a" style="left:13px;top:10px;width:8px;height:1px;background-image:repeating-linear-gradient(90deg,#808080 0 1px,transparent 1px 2px)"></div><div class="a" style="left:28px;top:18px;width:1px;height:312px;background-image:repeating-linear-gradient(180deg,#808080 0 1px,transparent 1px 2px)"></div><div class="a" style="left:47px;top:112px;width:1px;height:27px;background-image:repeating-linear-gradient(180deg,#808080 0 1px,transparent 1px 2px)"></div><svg class="a" style="left:4.5px;top:6.0px" width="9" height="9"><rect x=".5" y=".5" width="8" height="8" fill="#fff" stroke="#808080"/><path d="M2,4.5h5" stroke="#000"/></svg><svg class="a" style="left:20px;top:2px" width="16" height="16"><use href="#s-pc"/></svg><div class="tr" style="left:37.5px;top:2px;background:#0a246a;color:#fff;padding:0 2px;outline:1px dotted #f5db95;outline-offset:-1px">3WA-851BA9D5F76</div>
<div class="a" style="left:33px;top:26px;width:6px;height:1px;background-image:repeating-linear-gradient(90deg,#808080 0 1px,transparent 1px 2px)"></div><svg class="a" style="left:23.5px;top:22.0px" width="9" height="9"><rect x=".5" y=".5" width="8" height="8" fill="#fff" stroke="#808080"/><path d="M2,4.5h5" stroke="#000"/><path d="M4.5,2v5" stroke="#000"/></svg><svg class="a" style="left:39px;top:18px" width="16" height="16"><use href="#s-dvd"/></svg><div class="tr" style="left:59px;top:18px">DVD/CD-ROM 光碟機</div>
<div class="a" style="left:33px;top:42px;width:6px;height:1px;background-image:repeating-linear-gradient(90deg,#808080 0 1px,transparent 1px 2px)"></div><svg class="a" style="left:23.5px;top:38.0px" width="9" height="9"><rect x=".5" y=".5" width="8" height="8" fill="#fff" stroke="#808080"/><path d="M2,4.5h5" stroke="#000"/><path d="M4.5,2v5" stroke="#000"/></svg><svg class="a" style="left:39px;top:34px" width="16" height="16"><use href="#s-ide"/></svg><div class="tr" style="left:59px;top:34px">IDE ATA/ATAPI 控制器</div>
<div class="a" style="left:33px;top:58px;width:6px;height:1px;background-image:repeating-linear-gradient(90deg,#808080 0 1px,transparent 1px 2px)"></div><svg class="a" style="left:23.5px;top:54.0px" width="9" height="9"><rect x=".5" y=".5" width="8" height="8" fill="#fff" stroke="#808080"/><path d="M2,4.5h5" stroke="#000"/><path d="M4.5,2v5" stroke="#000"/></svg><svg class="a" style="left:39px;top:50px" width="16" height="16"><use href="#s-scsi"/></svg><div class="tr" style="left:59px;top:50px">SCSI 及 RAID 控制器</div>
<div class="a" style="left:33px;top:74px;width:6px;height:1px;background-image:repeating-linear-gradient(90deg,#808080 0 1px,transparent 1px 2px)"></div><svg class="a" style="left:23.5px;top:70.0px" width="9" height="9"><rect x=".5" y=".5" width="8" height="8" fill="#fff" stroke="#808080"/><path d="M2,4.5h5" stroke="#000"/><path d="M4.5,2v5" stroke="#000"/></svg><svg class="a" style="left:39px;top:66px" width="16" height="16"><use href="#s-sys"/></svg><div class="tr" style="left:59px;top:66px">系統裝置</div>
<div class="a" style="left:33px;top:90px;width:6px;height:1px;background-image:repeating-linear-gradient(90deg,#808080 0 1px,transparent 1px 2px)"></div><svg class="a" style="left:23.5px;top:86.0px" width="9" height="9"><rect x=".5" y=".5" width="8" height="8" fill="#fff" stroke="#808080"/><path d="M2,4.5h5" stroke="#000"/><path d="M4.5,2v5" stroke="#000"/></svg><svg class="a" style="left:39px;top:82px" width="16" height="16"><use href="#s-snd"/></svg><div class="tr" style="left:59px;top:82px">音效，視訊及遊戲控制器</div>
<div class="a" style="left:33px;top:106px;width:6px;height:1px;background-image:repeating-linear-gradient(90deg,#808080 0 1px,transparent 1px 2px)"></div><svg class="a" style="left:23.5px;top:102.0px" width="9" height="9"><rect x=".5" y=".5" width="8" height="8" fill="#fff" stroke="#808080"/><path d="M2,4.5h5" stroke="#000"/></svg><svg class="a" style="left:39px;top:98px" width="16" height="16"><use href="#s-cpu"/></svg><div class="tr" style="left:59px;top:98px">處理器</div>
<div class="a" style="left:48px;top:122px;width:9px;height:1px;background-image:repeating-linear-gradient(90deg,#808080 0 1px,transparent 1px 2px)"></div><svg class="a" style="left:58px;top:114px" width="16" height="16"><use href="#s-cpu"/></svg><div class="tr" style="left:78px;top:114px">Intel(R) Pentium(R) 4 CPU 3.00GHz</div>
<div class="a" style="left:48px;top:138px;width:9px;height:1px;background-image:repeating-linear-gradient(90deg,#808080 0 1px,transparent 1px 2px)"></div><svg class="a" style="left:58px;top:130px" width="16" height="16"><use href="#s-cpu"/></svg><div class="tr" style="left:78px;top:130px">Intel(R) Pentium(R) 4 CPU 3.00GHz</div>
<div class="a" style="left:33px;top:154px;width:6px;height:1px;background-image:repeating-linear-gradient(90deg,#808080 0 1px,transparent 1px 2px)"></div><svg class="a" style="left:23.5px;top:150.0px" width="9" height="9"><rect x=".5" y=".5" width="8" height="8" fill="#fff" stroke="#808080"/><path d="M2,4.5h5" stroke="#000"/><path d="M4.5,2v5" stroke="#000"/></svg><svg class="a" style="left:39px;top:146px" width="16" height="16"><use href="#s-fdd"/></svg><div class="tr" style="left:59px;top:146px">軟碟機</div>
<div class="a" style="left:33px;top:170px;width:6px;height:1px;background-image:repeating-linear-gradient(90deg,#808080 0 1px,transparent 1px 2px)"></div><svg class="a" style="left:23.5px;top:166.0px" width="9" height="9"><rect x=".5" y=".5" width="8" height="8" fill="#fff" stroke="#808080"/><path d="M2,4.5h5" stroke="#000"/><path d="M4.5,2v5" stroke="#000"/></svg><svg class="a" style="left:39px;top:162px" width="16" height="16"><use href="#s-ide"/></svg><div class="tr" style="left:59px;top:162px">軟碟機控制卡</div>
<div class="a" style="left:33px;top:186px;width:6px;height:1px;background-image:repeating-linear-gradient(90deg,#808080 0 1px,transparent 1px 2px)"></div><svg class="a" style="left:23.5px;top:182.0px" width="9" height="9"><rect x=".5" y=".5" width="8" height="8" fill="#fff" stroke="#808080"/><path d="M2,4.5h5" stroke="#000"/><path d="M4.5,2v5" stroke="#000"/></svg><svg class="a" style="left:39px;top:178px" width="16" height="16"><use href="#s-usb"/></svg><div class="tr" style="left:59px;top:178px">通用序列匯流排控制器</div>
<div class="a" style="left:33px;top:202px;width:6px;height:1px;background-image:repeating-linear-gradient(90deg,#808080 0 1px,transparent 1px 2px)"></div><svg class="a" style="left:23.5px;top:198.0px" width="9" height="9"><rect x=".5" y=".5" width="8" height="8" fill="#fff" stroke="#808080"/><path d="M2,4.5h5" stroke="#000"/><path d="M4.5,2v5" stroke="#000"/></svg><svg class="a" style="left:39px;top:194px" width="16" height="16"><use href="#s-port"/></svg><div class="tr" style="left:59px;top:194px">連接埠 (COM 和 LPT)</div>
<div class="a" style="left:33px;top:218px;width:6px;height:1px;background-image:repeating-linear-gradient(90deg,#808080 0 1px,transparent 1px 2px)"></div><svg class="a" style="left:23.5px;top:214.0px" width="9" height="9"><rect x=".5" y=".5" width="8" height="8" fill="#fff" stroke="#808080"/><path d="M2,4.5h5" stroke="#000"/><path d="M4.5,2v5" stroke="#000"/></svg><svg class="a" style="left:39px;top:210px" width="16" height="16"><use href="#s-card"/></svg><div class="tr" style="left:59px;top:210px">智慧卡讀取裝置</div>
<div class="a" style="left:33px;top:234px;width:6px;height:1px;background-image:repeating-linear-gradient(90deg,#808080 0 1px,transparent 1px 2px)"></div><svg class="a" style="left:23.5px;top:230.0px" width="9" height="9"><rect x=".5" y=".5" width="8" height="8" fill="#fff" stroke="#808080"/><path d="M2,4.5h5" stroke="#000"/><path d="M4.5,2v5" stroke="#000"/></svg><svg class="a" style="left:39px;top:226px" width="16" height="16"><use href="#s-mouse"/></svg><div class="tr" style="left:59px;top:226px">滑鼠及其他指標裝置</div>
<div class="a" style="left:33px;top:250px;width:6px;height:1px;background-image:repeating-linear-gradient(90deg,#808080 0 1px,transparent 1px 2px)"></div><svg class="a" style="left:23.5px;top:246.0px" width="9" height="9"><rect x=".5" y=".5" width="8" height="8" fill="#fff" stroke="#808080"/><path d="M2,4.5h5" stroke="#000"/><path d="M4.5,2v5" stroke="#000"/></svg><svg class="a" style="left:39px;top:242px" width="16" height="16"><use href="#s-sys"/></svg><div class="tr" style="left:59px;top:242px">電腦</div>
<div class="a" style="left:33px;top:266px;width:6px;height:1px;background-image:repeating-linear-gradient(90deg,#808080 0 1px,transparent 1px 2px)"></div><svg class="a" style="left:23.5px;top:262.0px" width="9" height="9"><rect x=".5" y=".5" width="8" height="8" fill="#fff" stroke="#808080"/><path d="M2,4.5h5" stroke="#000"/><path d="M4.5,2v5" stroke="#000"/></svg><svg class="a" style="left:39px;top:258px" width="16" height="16"><use href="#s-sys"/></svg><div class="tr" style="left:59px;top:258px">監視器</div>
<div class="a" style="left:33px;top:282px;width:6px;height:1px;background-image:repeating-linear-gradient(90deg,#808080 0 1px,transparent 1px 2px)"></div><svg class="a" style="left:23.5px;top:278.0px" width="9" height="9"><rect x=".5" y=".5" width="8" height="8" fill="#fff" stroke="#808080"/><path d="M2,4.5h5" stroke="#000"/><path d="M4.5,2v5" stroke="#000"/></svg><svg class="a" style="left:39px;top:274px" width="16" height="16"><use href="#s-disk"/></svg><div class="tr" style="left:59px;top:274px">磁碟機</div>
<div class="a" style="left:33px;top:298px;width:6px;height:1px;background-image:repeating-linear-gradient(90deg,#808080 0 1px,transparent 1px 2px)"></div><svg class="a" style="left:23.5px;top:294.0px" width="9" height="9"><rect x=".5" y=".5" width="8" height="8" fill="#fff" stroke="#808080"/><path d="M2,4.5h5" stroke="#000"/><path d="M4.5,2v5" stroke="#000"/></svg><svg class="a" style="left:39px;top:290px" width="16" height="16"><use href="#s-nic"/></svg><div class="tr" style="left:59px;top:290px">網路介面卡</div>
<div class="a" style="left:33px;top:314px;width:6px;height:1px;background-image:repeating-linear-gradient(90deg,#808080 0 1px,transparent 1px 2px)"></div><svg class="a" style="left:23.5px;top:310.0px" width="9" height="9"><rect x=".5" y=".5" width="8" height="8" fill="#fff" stroke="#808080"/><path d="M2,4.5h5" stroke="#000"/><path d="M4.5,2v5" stroke="#000"/></svg><svg class="a" style="left:39px;top:306px" width="16" height="16"><use href="#s-kbd"/></svg><div class="tr" style="left:59px;top:306px">鍵盤</div>
<div class="a" style="left:33px;top:330px;width:6px;height:1px;background-image:repeating-linear-gradient(90deg,#808080 0 1px,transparent 1px 2px)"></div><svg class="a" style="left:23.5px;top:326.0px" width="9" height="9"><rect x=".5" y=".5" width="8" height="8" fill="#fff" stroke="#808080"/><path d="M2,4.5h5" stroke="#000"/><path d="M4.5,2v5" stroke="#000"/></svg><svg class="a" style="left:39px;top:322px" width="16" height="16"><use href="#s-sys"/></svg><div class="tr" style="left:59px;top:322px">顯示卡</div>
</div></div>
<div class="sunk" style="left:4px;top:429px;width:411px;height:17px"></div><div class="sunk" style="left:417px;top:429px;width:131px;height:17px"></div><div class="sunk" style="left:550px;top:429px;width:86px;height:17px"></div></div>
<div class="a" style="left:0;top:994px;width:1280px;height:30px;background:#d4d0c8;box-shadow:inset 0 1px #d4d0c8,inset 0 2px #fff">
<div class="btn" style="left:2.5px;top:4px;width:47px;height:22px;font-weight:bold;line-height:21px;text-align:left"><svg class="a" style="left:3px;top:3px" width="16" height="16" viewBox="0 0 16 16"><path d="M1,3c2,-1 4,-1 6,0l-1,4.4c-2,-1 -4,-1 -6,0z" fill="#e04a2a"/><path d="M8,3.4c2,1 4,1 6,0l-1,4.4c-2,1 -4,1 -6,0z" fill="#3aa83a"/><path d="M0,8.4c2,-1 4,-1 6,0l-1,4.4c-2,-1 -4,-1 -6,0z" fill="#2a68d8"/><path d="M7,8.8c2,1 4,1 6,0l-1,4.4c-2,1 -4,1 -6,0z" fill="#f0c020"/></svg><span class="a" style="left:21px;top:0">開始</span></div><div class="a" style="left:56px;top:5px;width:3px;height:22px;box-shadow:inset 1px 1px #fff,inset -1px -1px #808080"></div><svg class="a" style="left:68px;top:7px" width="16" height="16" viewBox="0 0 16 16"><rect x="1" y="3" width="14" height="10" fill="#e8f0fa" stroke="#7aa0d0" stroke-width=".8"/><path d="M3,11l4,-5l3,3l3,-4" stroke="#5a90d0" fill="none"/></svg><svg class="a" style="left:89.5px;top:7px" width="16" height="16" viewBox="0 0 16 16"><circle cx="8" cy="8" r="6.5" fill="#e8eef8" stroke="#3a60b0" stroke-width="1.4"/><path d="M4,8h8M8,4c-3,3 -3,5 0,8" stroke="#3a60b0" fill="none"/></svg><svg class="a" style="left:110px;top:7px" width="16" height="16" viewBox="0 0 16 16"><circle cx="8" cy="8" r="7" fill="#f4f4f4"/><path d="M8,1a7,7 0 0 1 6,3.5l-6,3.5z" fill="#e03a2a"/><path d="M14,4.5a7,7 0 0 1 -6,10.5v-7z" fill="#3aa83a"/><path d="M8,15a7,7 0 0 1 -6,-10.5l6,3.5z" fill="#f0c020"/><path d="M6.4,5.4l4.4,2.6l-4.4,2.6z" fill="#2a58c8"/></svg><svg class="a" style="left:134.5px;top:7px" width="16" height="16" viewBox="0 0 16 16"><path d="M3,1h10v9l-5,5l-5,-5z" fill="#5a7898" stroke="#2a4868" stroke-width=".8"/><path d="M5,3h6v6l-3,3l-3,-3z" fill="#8aa8c8"/></svg><svg class="a" style="left:157px;top:7px" width="16" height="16" viewBox="0 0 16 16"><circle cx="8" cy="8" r="7" fill="#2a4ab0"/><path d="M1.4,7c1,-5 8,-7 12,-3c2,3 1,8 -3,10c-5,2 -9,-2 -9,-7z" fill="#f08018"/><circle cx="9" cy="6.5" r="3.2" fill="#3a5ac0"/></svg><svg class="a" style="left:181px;top:7px" width="16" height="16" viewBox="0 0 16 16"><rect x="0.5" y="0.5" width="15" height="15" rx="2" fill="#f0901a" stroke="#3a9a3a" stroke-width="1"/><ellipse cx="8" cy="8.5" rx="5.5" ry="4.5" fill="#fff"/><circle cx="6" cy="8" r=".9" fill="#e05a10"/><circle cx="10" cy="8" r=".9" fill="#e05a10"/></svg><svg class="a" style="left:203px;top:7px" width="16" height="16" viewBox="0 0 16 16"><rect x="7" y="1" width="8" height="6" fill="#2848c0" stroke="#222" stroke-width=".7"/><rect x="1" y="7" width="8" height="6" fill="#3a68d8" stroke="#222" stroke-width=".7"/><path d="M2,15h7M9,9l4,-1" stroke="#e8c020" stroke-width="1.6"/></svg><svg class="a" style="left:227px;top:7px" width="16" height="16" viewBox="0 0 16 16"><circle cx="8" cy="8.5" r="6" fill="none" stroke="#2a7ae0" stroke-width="3"/><path d="M3,8.5h10" stroke="#2a7ae0" stroke-width="2.4"/><path d="M1,6c3,-6 11,-6 14,-2" stroke="#5ab0ff" stroke-width="1.3" fill="none"/></svg><svg class="a" style="left:251px;top:7px" width="16" height="16" viewBox="0 0 16 16"><rect x="1" y="1" width="14" height="14" fill="#1a3a9a"/><path d="M4,3v9h5M8,4h4v8" stroke="#fff" stroke-width="1.8" fill="none"/></svg><svg class="a" style="left:273px;top:7px" width="16" height="16" viewBox="0 0 16 16"><circle cx="8" cy="7.5" r="6.5" fill="#2a86e0"/><circle cx="8" cy="7.5" r="3.6" fill="#dceaf8"/><path d="M8,8l5,6l-3,1z" fill="#2a86e0"/></svg><svg class="a" style="left:296px;top:7px" width="16" height="16" viewBox="0 0 16 16"><rect x="1" y="1" width="14" height="14" fill="#111"/><path d="M4,4h3v8M9,3v10M9,7h4M11,4l2,8" stroke="#e8e8d0" stroke-width="1.2" fill="none"/></svg><svg class="a" style="left:318px;top:7px" width="16" height="16" viewBox="0 0 16 16"><rect x="1" y="1" width="14" height="14" fill="#0a0a0a"/><rect x="1" y="1" width="14" height="3" fill="#2a4ac8"/><path d="M3,7h4M5,7v6M9,7l2,3l2,-3M11,10v3" stroke="#fff" stroke-width="1.2" fill="none"/></svg><svg class="a" style="left:341px;top:7px" width="16" height="16" viewBox="0 0 16 16"><rect x="1" y="2" width="14" height="12" rx="1" fill="#1a4a9a"/><path d="M3,12l5,-7l5,4l-6,4z" fill="#f0f4fa"/><circle cx="11.5" cy="5" r="2" fill="#e8e8f8"/></svg><svg class="a" style="left:364.5px;top:7px" width="16" height="16" viewBox="0 0 16 16"><rect x="1" y="1" width="14" height="14" rx="2" fill="#58a8e8"/><path d="M12,5a5,5 0 1 0 0,6" stroke="#fff" stroke-width="2.2" fill="none"/><rect x="10" y="6.6" width="4" height="3" fill="#d8ecff"/></svg>
<div class="a" style="left:397px;top:5px;width:3px;height:22px;box-shadow:inset 1px 1px #fff,inset -1px -1px #808080"></div><div class="btn" style="left:405px;top:4px;width:157.5px;height:22px;line-height:21px;text-align:left"><svg class="a" style="left:4px;top:3px" width="16" height="16"><use href="#s-tm"/></svg><span class="a" style="left:24px;top:0;letter-spacing:-.1px;word-spacing:-1px">Windows 工作管理員</span></div><div class="a" style="left:567.5px;top:4px;width:158.5px;height:22px;line-height:22px;background:#ebe9e5;box-shadow:inset 1px 1px #404040,inset -1px -1px #fff,inset 2px 2px #808080"><svg class="a" style="left:5px;top:4px" width="16" height="16"><use href="#s-pc"/></svg><span class="a" style="left:25px;top:1px">裝置管理員</span></div>
<div class="a" style="left:894px;top:5px;width:3px;height:22px;box-shadow:inset 1px 1px #fff,inset -1px -1px #808080"></div><svg class="a" style="left:902px;top:7px" width="16" height="16" viewBox="0 0 16 16"><rect x="1" y="5" width="14" height="9" fill="#e8e8e8" stroke="#333" stroke-width=".8"/><path d="M3,8h10M3,10.4h10M4,12.4h8" stroke="#333" stroke-width=".9" stroke-dasharray="1.4 .8"/><path d="M8,5c0,-3 3,-2 3,-4" stroke="#333" stroke-width=".8" fill="none"/></svg><div class="sunk" style="left:920.5px;top:4px;width:357.5px;height:22px"></div><svg class="a" style="left:922px;top:7px" width="16" height="16" viewBox="0 0 16 16"><rect x="2" y="2" width="12" height="12" fill="#1a7a2a" stroke="#0a3a10" stroke-width="1"/><path d="M6,2v12M10,2v12M2,6h12M2,10h12" stroke="#0a4a14" stroke-width=".7"/></svg><svg class="a" style="left:939px;top:7px" width="16" height="16" viewBox="0 0 16 16"><circle cx="8" cy="8" r="6.5" fill="#8a8a94" stroke="#444" stroke-width=".8"/><circle cx="8" cy="8" r="4" fill="#d4d4dc"/><path d="M8,8V4.6M8,8l2.4,1.4" stroke="#222" stroke-width="1"/></svg><svg class="a" style="left:958px;top:7px" width="16" height="16" viewBox="0 0 16 16"><rect x="6" y="1" width="8" height="6" fill="#3a58c8" stroke="#222" stroke-width=".7"/><rect x="1" y="6" width="8" height="6" fill="#4a70d8" stroke="#222" stroke-width=".7"/><path d="M8,9l6,6M14,9l-6,6" stroke="#e01818" stroke-width="2"/></svg><svg class="a" style="left:976.5px;top:7px" width="16" height="16" viewBox="0 0 16 16"><rect x="6" y="1" width="8" height="6" fill="#3a58c8" stroke="#222" stroke-width=".7"/><rect x="1" y="6" width="8" height="6" fill="#4a70d8" stroke="#222" stroke-width=".7"/><path d="M2,14h8" stroke="#888" stroke-width="1.4"/></svg><svg class="a" style="left:994.5px;top:7px" width="16" height="16" viewBox="0 0 16 16"><path d="M8,1C12,1 15,4 15,8C15,12 12,15 8,15C4,15 1,12 1,8C1,4 4,1 8,1Z" fill="#3ac03a"/><path d="M4,8l3,3l5,-6" stroke="#fff" stroke-width="2.2" fill="none"/></svg><svg class="a" style="left:1012px;top:7px" width="16" height="16" viewBox="0 0 16 16"><path d="M8,1l6,2v5c0,4 -3,6 -6,7c-3,-1 -6,-3 -6,-7v-5z" fill="#d02828" stroke="#6a48a8" stroke-width="1"/><path d="M5.6,5.6l4.8,4.8M10.4,5.6l-4.8,4.8" stroke="#fff" stroke-width="1.6"/></svg><svg class="a" style="left:1029.5px;top:7px" width="16" height="16" viewBox="0 0 16 16"><circle cx="8" cy="8" r="6.6" fill="#f4d428" stroke="#a07a08" stroke-width=".8"/><circle cx="5.6" cy="6.4" r="1" fill="#402808"/><circle cx="10.4" cy="6.4" r="1" fill="#402808"/><path d="M4.4,9.4c2,3 5.2,3 7.2,0z" fill="#d83018"/></svg><svg class="a" style="left:1048px;top:7px" width="16" height="16" viewBox="0 0 16 16"><circle cx="8" cy="4.4" r="3" fill="#3ab83a"/><path d="M3,15c0,-6 10,-6 10,0z" fill="#3ab83a"/></svg><svg class="a" style="left:1067px;top:7px" width="16" height="16" viewBox="0 0 16 16"><rect x="1" y="1" width="14" height="14" rx="1.5" fill="#e02020"/><path d="M4,8.4h8c0,-5 -8,-5 -8,0c0,5 6,5 8,2" stroke="#fff" stroke-width="1.8" fill="none"/></svg><svg class="a" style="left:1084.5px;top:7px" width="16" height="16" viewBox="0 0 16 16"><path d="M8,2l6,6h-12z" fill="#d82020"/><rect x="3" y="10" width="10" height="4" fill="#3a58c8"/></svg><svg class="a" style="left:1102px;top:7px" width="16" height="16" viewBox="0 0 16 16"><path d="M2,12l6,-9l6,4l-5,8z" fill="#c8d838" stroke="#6a7a10" stroke-width=".7"/><path d="M5,11l4,-5" stroke="#fff" stroke-width="1"/></svg><svg class="a" style="left:1119px;top:7px" width="16" height="16" viewBox="0 0 16 16"><rect x="1.5" y="1.5" width="13" height="13" fill="#2a68c8" stroke="#e8f0ff" stroke-width="1"/><path d="M5,4v8M5,8h6M11,4v8" stroke="#fff" stroke-width="1.5"/></svg><div class="a" style="left:1141px;top:8.5px;color:#222;font-size:12px;letter-spacing:.1px">星期二 09/03/24 00:29:25</div>
</div>
</div>
<div class="wm" style="left:-414.0px;top:1068.1px;transform:rotate(-34.94deg)"><span style="display:inline-block;width:529.7px">3WA問題解決專家工作室<b style="font-weight:normal;letter-spacing:2.3px">~https://3wa.tw</b></span><span style="display:inline-block;width:529.7px">3WA問題解決專家工作室<b style="font-weight:normal;letter-spacing:2.3px">~https://3wa.tw</b></span><span style="display:inline-block;width:529.7px">3WA問題解決專家工作室<b style="font-weight:normal;letter-spacing:2.3px">~https://3wa.tw</b></span><span style="display:inline-block;width:529.7px">3WA問題解決專家工作室<b style="font-weight:normal;letter-spacing:2.3px">~https://3wa.tw</b></span></div>
<div class="ov" style="left:8.5px;top:-.4px;font-size:10.9px;line-height:16px"><span style="letter-spacing:-.2px">3WA</span>問題解決專家工作室<span style="letter-spacing:.75px">~https://3wa.tw</span></div>
<div class="ov" style="left:10.5px;top:801px;font-size:11px;line-height:16px;font-weight:bold">載入時間:0.02秒</div>
<div class="ov" style="right:7px;top:783px;font-size:18px;line-height:22px;letter-spacing:.3px">2009-03-24(二)</div>
<div class="ov" style="left:816.5px;top:804.5px;font-size:10.9px;line-height:16px"><span style="letter-spacing:-.2px">3WA</span>問題解決專家工作室<span style="letter-spacing:.75px">~https://3wa.tw</span></div>
</body></html>
